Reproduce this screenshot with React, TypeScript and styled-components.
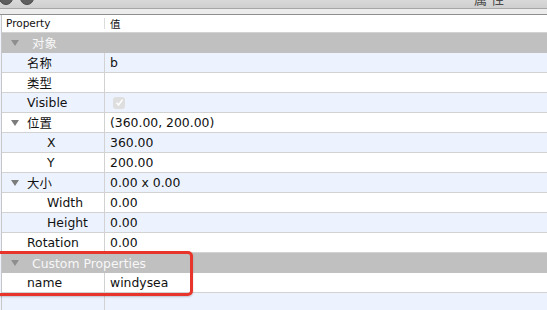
import React from "react";
import styled, {createGlobalStyle} from "styled-components";

const GlobalStyle = createGlobalStyle`
    body{
        margin: 0;
        background: #ffffff;
        font-family: "DejaVu Sans", "Noto Sans CJK SC", sans-serif;
    }
`

const Window = styled.div`
    position: relative;
    width: 547px;
    height: 310px;
    overflow: hidden;
    background: #eef3fd;
`

const TitleBar = styled.div`
    height: 8px;
    background: linear-gradient(#d9d9d9, #cfcfcf);
    border-bottom: 1px solid #a7a7a7;
    display: flex;
    align-items: flex-end;
    overflow: hidden;
    position: relative;
    .lights{
        display: flex;
        gap: 7px;
        margin-top: -9px;
        align-self: flex-start;
        margin-left: -1px;
    }
    .light{
        width: 12px;
        height: 12px;
        border-radius: 50%;
        background: #5f5f5f;
        border: 1px solid #4a4a4a;
    }
    .title{
        margin-left: 440px;
        align-self: flex-start;
        margin-top: -11px;
        font-size: 13px;
        letter-spacing: 4px;
        color: #4a4a4a;
    }
`

const Strip = styled.div`
    height: 5px;
    background: #ececec;
    border-bottom: 1px solid #8f8f8f;
`

const Table = styled.div`
    margin-left: 1px;
    border-left: 1px solid #c6c6c6;
    display: flex;
    flex-direction: column;
`

const HeaderRow = styled.div`
    height: 17px;
    background: #ffffff;
    border-bottom: 1px solid #d2d2d2;
    display: flex;
    align-items: center;
    font-size: 10.5px;
    color: #111;
    .key{
        width: 103px;
        padding-left: 4px;
        box-sizing: border-box;
        border-right: 1px solid #dcdcdc;
        height: 11px;
        line-height: 11px;
    }
    .val{
        padding-left: 5px;
    }
`

const Row = styled.div<{$stripe: boolean}>`
    height: 20px;
    box-sizing: border-box;
    border-bottom: 1px solid #d2d2d2;
    background: ${p=>p.$stripe ? "#edf3fe" : "#ffffff"};
    display: flex;
    font-size: 12.4px;
    color: #111;
`

const KeyCell = styled.div<{$indent: number}>`
    width: 103px;
    border-right: 1px solid #d2d2d2;
    display: flex;
    align-items: center;
    padding-left: ${p=>p.$indent}px;
    box-sizing: border-box;
    position: relative;
`

const ValCell = styled.div`
    flex: 1;
    display: flex;
    align-items: center;
    padding-left: 5px;
`

const GroupRow = styled.div`
    height: 20px;
    background: #c0c0c0;
    display: flex;
    align-items: center;
    font-size: 12.4px;
    color: #f7f7f7;
    padding-left: 30px;
    position: relative;
`

const Caret = styled.span<{$dark?: boolean}>`
    position: absolute;
    left: 9px;
    top: 7px;
    width: 0;
    height: 0;
    border-left: 4px solid transparent;
    border-right: 4px solid transparent;
    border-top: 6px solid ${p=>p.$dark ? "#7c7c7c" : "#8e8e8e"};
`

const Check = styled.div`
    width: 12px;
    height: 12px;
    margin-left: 3px;
    border-radius: 3px;
    background: #dedede;
    display: flex;
    align-items: center;
    justify-content: center;
`

const Highlight = styled.div`
    position: absolute;
    left: -6px;
    top: 251px;
    width: 199px;
    height: 45px;
    box-sizing: border-box;
    border: 3px solid #e8352b;
    border-radius: 5px;
    box-shadow: 0 1px 2px rgba(0,0,0,0.2);
`

type Item =
    | {kind: "group", label: string}
    | {kind: "prop", label: string, value?: string, indent: number, caret?: boolean, check?: boolean}

const items: Item[] = [
    {kind: "group", label: "对象"},
    {kind: "prop", label: "名称", value: "b", indent: 25},
    {kind: "prop", label: "类型", value: "", indent: 25},
    {kind: "prop", label: "Visible", indent: 25, check: true},
    {kind: "prop", label: "位置", value: "(360.00, 200.00)", indent: 25, caret: true},
    {kind: "prop", label: "X", value: "360.00", indent: 45},
    {kind: "prop", label: "Y", value: "200.00", indent: 45},
    {kind: "prop", label: "大小", value: "0.00 x 0.00", indent: 25, caret: true},
    {kind: "prop", label: "Width", value: "0.00", indent: 45},
    {kind: "prop", label: "Height", value: "0.00", indent: 45},
    {kind: "prop", label: "Rotation", value: "0.00", indent: 25},
    {kind: "group", label: "Custom Properties"},
    {kind: "prop", label: "name", value: "windysea", indent: 25},
    {kind: "prop", label: "", value: "", indent: 25},
]

export default function App(){
    return(
        <Window>
            <GlobalStyle/>
            <TitleBar>
                <div className="lights">
                    <div className="light"/>
                    <div className="light"/>
                </div>
                <div className="title">属性</div>
            </TitleBar>
            <Strip/>
            <Table>
                <HeaderRow>
                    <div className="key">Property</div>
                    <div className="val">值</div>
                </HeaderRow>
                {items.map((it, i)=>
                    it.kind === "group" ?
                    (<GroupRow key={i}>
                        <Caret/>
                        {it.label}
                    </GroupRow>)
                    :
                    (<Row key={i} $stripe={i % 2 === 1}>
                        <KeyCell $indent={it.indent}>
                            {it.caret ? <Caret $dark/> : null}
                            {it.label}
                        </KeyCell>
                        <ValCell>{
                            it.check ?
                            <Check>
                                <svg width="9" height="9" viewBox="0 0 9 9">
                                    <path d="M1.5 4.8 L3.6 7 L7.5 1.6" fill="none" stroke="#ffffff" strokeWidth="1.5"/>
                                </svg>
                            </Check>
                            : it.value
                        }</ValCell>
                    </Row>)
                )}
            </Table>
            <Highlight/>
        </Window>
    )
}
